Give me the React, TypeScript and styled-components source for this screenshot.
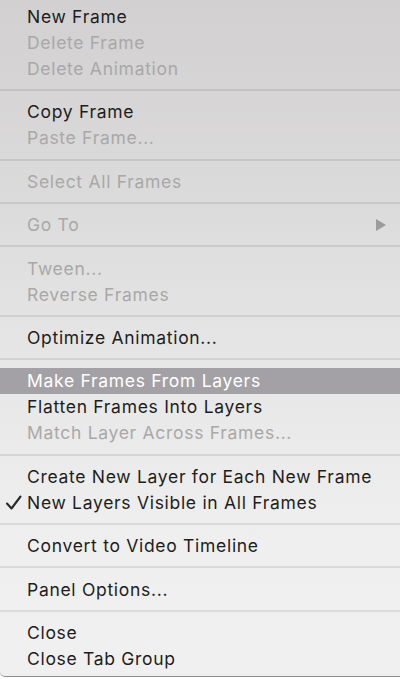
import { createGlobalStyle, styled } from "styled-components";

const GlobalStyle = createGlobalStyle`
  html, body {
    margin: 0;
    padding: 0;
    background: #ffffff;
  }
  body {
    font-family: "Inter", "Liberation Sans", sans-serif;
    -webkit-font-smoothing: antialiased;
  }
`;

const Menu = styled.div`
  width: 420px;
  height: 677px;
  box-sizing: border-box;
  padding-top: 3.5px;
  background: linear-gradient(180deg, #d2d0d0 0%, #dcdbdb 30%, #e8e7e7 55%, #efefef 80%, #f0f0f0 100%);
  border-bottom: 1px solid #8c8c8c;
  border-bottom-left-radius: 5px;
  overflow: hidden;
  display: flex;
  flex-direction: column;
`;

const Item = styled.div<{ $disabled?: boolean; $active?: boolean }>`
  position: relative;
  height: 26px;
  display: flex;
  align-items: center;
  padding-left: 27px;
  padding-right: 34px;
  font-size: 17.5px;
  letter-spacing: 0.7px;
  color: ${(p) => (p.$active ? "#ffffff" : p.$disabled ? "#a9a8a8" : "#1d1d1d")};
  background: ${(p) => (p.$active ? "#a3a1a5" : "transparent")};
  white-space: nowrap;
`;

const Separator = styled.div<{ $h?: number }>`
  height: ${(p) => p.$h ?? 17.4}px;
  display: flex;
  align-items: center;

  &::after {
    content: "";
    display: block;
    width: 100%;
    height: 2px;
    background: rgba(0, 0, 0, 0.085);
  }
`;

const Check = styled.svg`
  position: absolute;
  left: 5px;
  top: 6px;
`;

const Arrow = styled.svg`
  position: absolute;
  left: 375px;
  top: 6px;
`;

type Entry = { label: string; disabled?: boolean; active?: boolean; checked?: boolean; submenu?: boolean };

const groups: Entry[][] = [
  [{ label: "New Frame" }, { label: "Delete Frame", disabled: true }, { label: "Delete Animation", disabled: true }],
  [{ label: "Copy Frame" }, { label: "Paste Frame...", disabled: true }],
  [{ label: "Select All Frames", disabled: true }],
  [{ label: "Go To", disabled: true, submenu: true }],
  [{ label: "Tween...", disabled: true }, { label: "Reverse Frames", disabled: true }],
  [{ label: "Optimize Animation..." }],
  [
    { label: "Make Frames From Layers", active: true },
    { label: "Flatten Frames Into Layers" },
    { label: "Match Layer Across Frames...", disabled: true },
  ],
  [{ label: "Create New Layer for Each New Frame" }, { label: "New Layers Visible in All Frames", checked: true }],
  [{ label: "Convert to Video Timeline" }],
  [{ label: "Panel Options..." }],
  [{ label: "Close" }, { label: "Close Tab Group" }],
];

function MenuItem({ entry }: { entry: Entry }) {
  return (
    <Item $disabled={entry.disabled} $active={entry.active}>
      {entry.checked && (
        <Check width="18" height="16" viewBox="0 0 18 16">
          <path d="M2 8.5 L6.5 13.5 L15.5 1.5" fill="none" stroke="#2a2a2a" strokeWidth="2.1" strokeLinecap="round" strokeLinejoin="round" />
        </Check>
      )}
      {entry.label}
      {entry.submenu && (
        <Arrow width="12" height="14" viewBox="0 0 12 14">
          <path d="M1 1 L11 7 L1 13 Z" fill="#9c9c9c" />
        </Arrow>
      )}
    </Item>
  );
}

export default function App() {
  return (
    <>
      <GlobalStyle />
      <Menu>
        {groups.map((group, gi) => (
          <div key={gi}>
            {gi > 0 && <Separator />}
            {group.map((entry) => (
              <MenuItem key={entry.label} entry={entry} />
            ))}
          </div>
        ))}
      </Menu>
    </>
  );
}
